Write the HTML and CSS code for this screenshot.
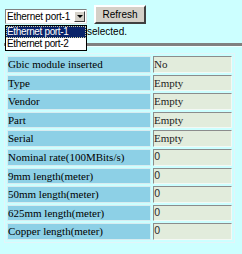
FILE: index.html
```html
<html>
<head>
<meta charset="UTF-8">
<title>Gbic Information</title>
<link rel="stylesheet" href="styles.css">
</head>
<body>
<div class="bar">
	<div class="sel">
		<span class="selText">Ethernet port-1</span>
		<span class="selBtn"><span class="arrow"></span></span>
	</div>
	<div class="btn">Refresh</div>
</div>
<p class="msg">selected.</p>
<hr class="line"/>
<table class="info">
	<tr><td class="lbl">Gbic module inserted</td><td class="val">No</td></tr>
	<tr><td class="lbl">Type</td><td class="val">Empty</td></tr>
	<tr><td class="lbl">Vendor</td><td class="val">Empty</td></tr>
	<tr><td class="lbl">Part</td><td class="val">Empty</td></tr>
	<tr><td class="lbl">Serial</td><td class="val">Empty</td></tr>
	<tr><td class="lbl">Nominal rate(100MBits/s)</td><td class="val num">0</td></tr>
	<tr><td class="lbl">9mm length(meter)</td><td class="val num">0</td></tr>
	<tr><td class="lbl">50mm length(meter)</td><td class="val num">0</td></tr>
	<tr><td class="lbl">625mm length(meter)</td><td class="val num">0</td></tr>
	<tr><td class="lbl">Copper length(meter)</td><td class="val num">0</td></tr>
</table>
<div class="drop">
	<div class="opt optOn">Ethernet port-1</div>
	<div class="opt">Ethernet port-2</div>
</div>
</body>
</html>
```

FILE: styles.css
```css
body {
	margin: 0;
	padding: 0 0 0 4px;
	background-color: #ccffff;
	font-family: 'Liberation Sans', Arial, sans-serif;
	font-size: 10px;
}
.bar {
	display: flex;
	align-items: flex-end;
	gap: 7px;
	padding-top: 5px;
	margin-left: 1px;
}
.sel {
	display: flex;
	align-items: center;
	justify-content: space-between;
	box-sizing: border-box;
	width: 82px;
	height: 15px;
	background-color: #ffffff;
	border-top: 1px solid #808080;
	border-left: 1px solid #808080;
	border-right: 1px solid #e0e0e0;
	border-bottom: 1px solid #e0e0e0;
	padding: 0 1px 0 1px;
}
.selText {
	letter-spacing: -0.25px;
	color: #000000;
	line-height: 12px;
}
.selBtn {
	display: flex;
	align-items: center;
	justify-content: center;
	box-sizing: border-box;
	width: 11px;
	height: 11px;
	background-color: #d4d0c8;
	border-top: 1px solid #ffffff;
	border-left: 1px solid #ffffff;
	border-right: 1px solid #404040;
	border-bottom: 1px solid #404040;
}
.arrow {
	width: 0;
	height: 0;
	border-left: 3px solid transparent;
	border-right: 3px solid transparent;
	border-top: 3px solid #000000;
}
.btn {
	box-sizing: border-box;
	width: 52px;
	height: 19px;
	line-height: 15px;
	text-align: center;
	background-color: #d4d0c8;
	border-top: 2px solid #ffffff;
	border-left: 2px solid #ffffff;
	border-right: 2px solid #404040;
	border-bottom: 2px solid #404040;
	color: #000000;
	font-size: 10px;
}
.msg {
	margin: 2px 0 0 83px;
	line-height: 12px;
	color: #000000;
}
.drop {
	position: absolute;
	left: 5px;
	top: 25px;
	width: 82px;
	box-sizing: border-box;
	background-color: #ffffff;
	border: 1px solid #000000;
}
.opt {
	height: 12px;
	line-height: 12px;
	padding-left: 1px;
	letter-spacing: -0.35px;
	color: #000000;
	box-sizing: border-box;
}
.optOn {
	background-color: #0a246a;
	color: #ffffff;
	border: 1px dotted #d0d0a0;
	line-height: 10px;
	padding-left: 0;
}
.line {
	height: 0;
	margin: 5px 0 6px 0;
	border: 0;
	border-top: 3px solid #808080;
	border-bottom: 1px solid #eefefe;
}
.info {
	width: 231px;
	border-collapse: separate;
	border-spacing: 2px;
	border: 1px solid #e4f4f8;
	font-family: 'Liberation Serif', 'Times New Roman', serif;
	font-size: 11px;
}
.info td {
	padding: 1px 1px 1px 0;
	line-height: 12.6px;
	white-space: nowrap;
}
.lbl {
	width: 141px;
	background-color: #8dd0e6;
	color: #000000;
	border: 1px solid #d8ecf0;
}
.val {
	background-color: #e2ecdc;
	color: #222222;
	border-top: 1px solid #8c8c8c;
	border-left: 1px solid #8c8c8c;
	border-right: 1px solid #f4f8f4;
	border-bottom: 1px solid #f4f8f4;
	padding-left: 1px;
}
.info td.num {
	font-family: 'DejaVu Sans', Verdana, sans-serif;
	font-size: 10px;
	color: #333333;
}
```
